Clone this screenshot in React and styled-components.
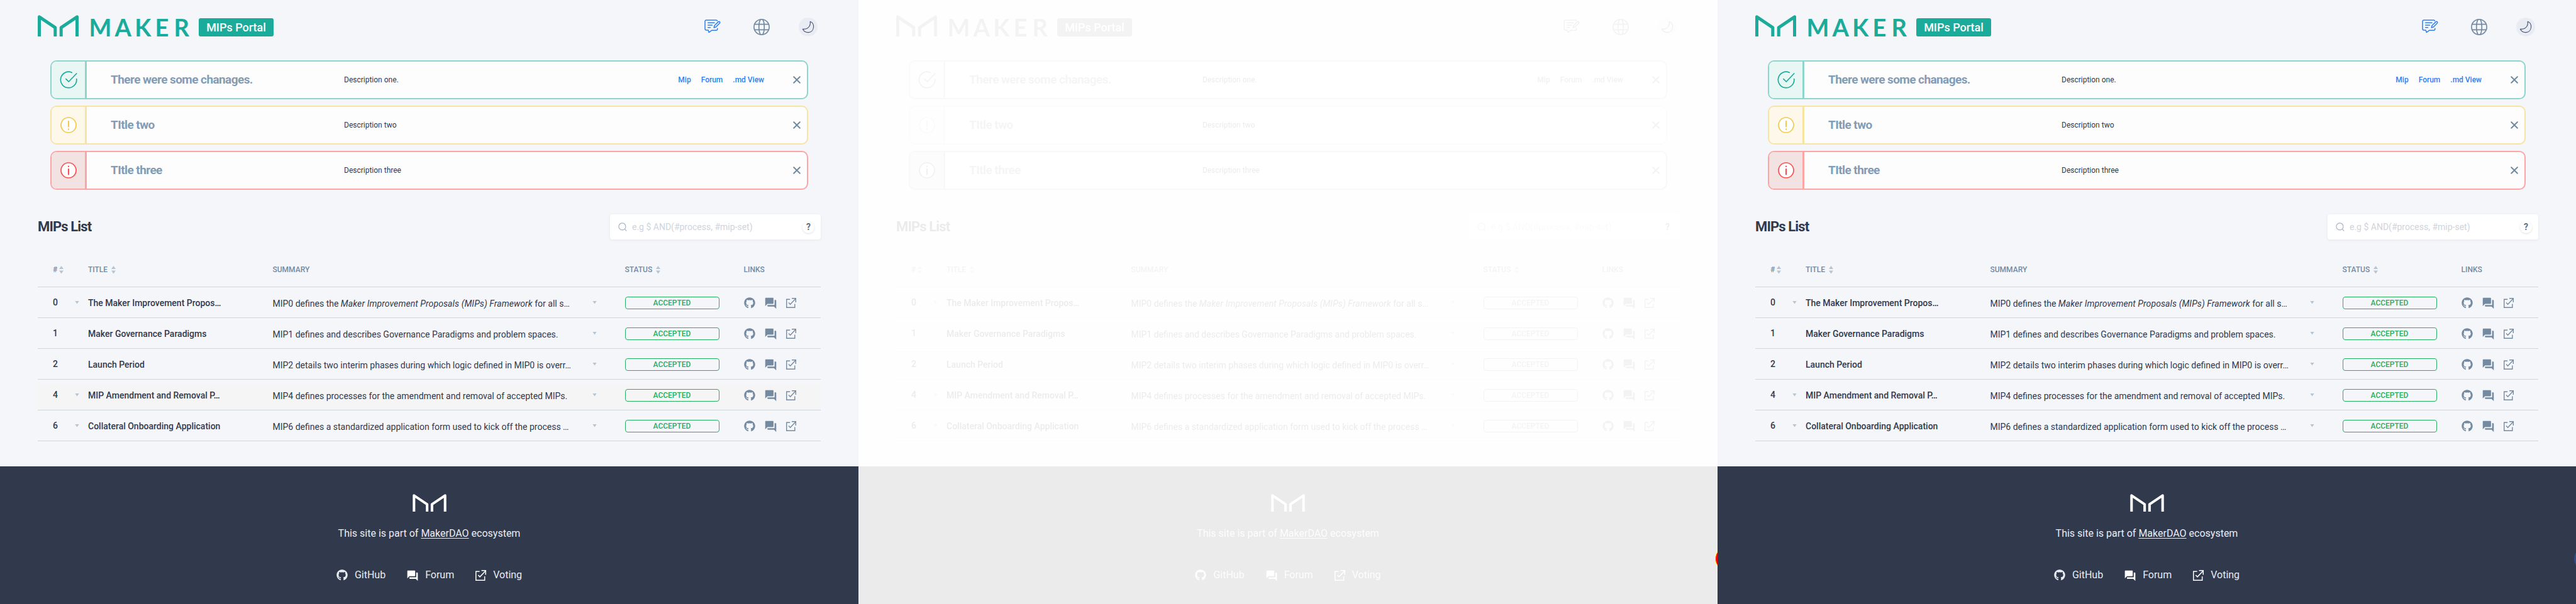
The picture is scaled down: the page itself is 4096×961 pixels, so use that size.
import React from "react";
import styled, { createGlobalStyle, css } from "styled-components";
import { FaGithub } from "react-icons/fa";
import { MdForum } from "react-icons/md";

const GlobalStyle = createGlobalStyle`
  * { box-sizing: border-box; }
  body { margin: 0; background: #fff; font-family: Roboto, "Liberation Sans", sans-serif; }
`;

const Board = styled.div`
  display: grid;
  grid-template-columns: 1365px 1366px 1365px;
  height: 961px;
  overflow: hidden;
`;

const Pane = styled.section`
  position: relative;
  overflow: hidden;
  height: 961px;
  background: #fff;
`;

const Page = styled.div`
  display: flex;
  flex-direction: column;
  height: 961px;
  background: #f5f6fa;
  color: #31394d;
  ${(p) => p.$faded && css`filter: grayscale(1) opacity(0.1);`}
`;

const HelpBubble = styled.div`
  position: absolute;
  left: 1362px;
  top: 870px;
  width: 38px;
  height: 38px;
  border-radius: 50%;
  background: ${(p) => (p.$changed ? "#f00" : "#2f4f86")};
  border: ${(p) => (p.$changed ? "1px solid #ff0" : "none")};
`;

const Header = styled.header`
  display: flex;
  justify-content: space-between;
  height: 96px;
  padding: 24px 65px 0 60px;
`;

const Brand = styled.div`
  display: flex;
  align-items: flex-end;
  height: 34px;
`;

const BrandLogo = styled.svg`
  width: 245px;
  height: 34px;
  overflow: visible;
  margin-right: 11px;
`;

const Portal = styled.span`
  width: 119px;
  height: 29px;
  border-radius: 3px;
  background: #1aab9b;
  color: #fff;
  font-size: 18px;
  font-weight: 500;
  line-height: 29px;
  text-align: center;
`;

const Tools = styled.nav`
  display: flex;
  align-items: center;
  height: 30px;
  margin-top: 4px;
`;

const ChatIcon = styled.svg`
  width: 26px;
  height: 22px;
  margin: 0 52px 3px 0;
`;

const GlobeIcon = styled.svg`
  width: 26px;
  height: 26px;
  margin-right: 46px;
`;

const ThemeButton = styled.span`
  display: flex;
  align-items: center;
  justify-content: center;
  width: 30px;
  height: 30px;
  border-radius: 50%;
  background: #e9ecf3;
`;

const Alerts = styled.div`
  display: flex;
  flex-direction: column;
  gap: 10px;
  padding: 0 80px;
  margin-bottom: 39px;
`;

const tones = {
  success: { line: "#8dd5cd", tint: "#e8f7f4" },
  warning: { line: "#f8e3a1", tint: "#fdf8e9" },
  danger: { line: "#fda5a5", tint: "#f3e2e2" },
};

const Alert = styled.article`
  display: flex;
  align-items: center;
  height: 62px;
  border: 2px solid ${(p) => tones[p.$tone].line};
  border-radius: 10px;
  background: #fdfdfd;
  overflow: hidden;
`;

const AlertIcon = styled.div`
  display: flex;
  align-items: center;
  justify-content: center;
  width: 56px;
  height: 58px;
  border-right: 3px solid ${(p) => tones[p.$tone].line};
  background: ${(p) => tones[p.$tone].tint};
`;

const AlertTitle = styled.h3`
  width: 371px;
  margin: 0 0 0 38px;
  color: #839cb5;
  font-size: 19px;
  font-weight: 700;
  letter-spacing: -0.58px;
  line-height: 24px;
`;

const AlertText = styled.p`
  flex: 1;
  margin: 0;
  font-size: 12px;
  line-height: 18px;
`;

const AlertLinks = styled.div`
  display: flex;
  gap: 16px;
  margin-right: 46px;
  color: #2f80ed;
  font-size: 12px;
  font-weight: 500;
  line-height: 18px;
`;

const CloseIcon = styled.svg`
  width: 12px;
  height: 12px;
  margin-right: 10px;
  stroke: #708aa0;
  stroke-width: 2;
  stroke-linecap: round;
`;

const ListBar = styled.div`
  display: flex;
  align-items: center;
  justify-content: space-between;
  height: 40px;
  margin: 0 60px 21px;
`;

const ListTitle = styled.h2`
  margin: 0;
  font-size: 22px;
  font-weight: 700;
  letter-spacing: -0.88px;
  line-height: 40px;
`;

const Search = styled.div`
  display: flex;
  align-items: center;
  width: 335px;
  height: 40px;
  padding: 0 10px 0 13px;
  border-radius: 4px;
  background: #fff;
  box-shadow: 0 1px 4px rgba(49, 57, 77, 0.07);
`;

const Placeholder = styled.span`
  flex: 1;
  margin-left: 8px;
  color: #d0d4db;
  font-size: 14px;
  line-height: 20px;
`;

const Hint = styled.span`
  width: 19px;
  height: 19px;
  border-radius: 50%;
  box-shadow: 0 1px 3px rgba(49, 57, 77, 0.16);
  color: #5b7086;
  font-size: 14px;
  font-weight: 700;
  line-height: 19px;
  text-align: center;
`;

const Table = styled.div`
  flex: 1;
  margin: 0 60px;
`;

const columns = css`
  display: grid;
  grid-template-columns: 35px 21px 293.5px 508.5px 51.5px 189px 1fr;
  align-items: center;
  padding-left: 24px;
  border-bottom: 1px solid #d1d5da;
`;

const HeadRow = styled.div`
  ${columns}
  height: 55px;
  color: #748aa1;
  font-size: 12px;
  font-weight: 500;
`;

const HeadCell = styled.span`
  display: flex;
  align-items: center;
  gap: ${(p) => (p.$tight ? 3 : 6)}px;
  grid-column: ${(p) => p.$col};
`;

const SortIcon = styled.svg`
  width: 7px;
  height: 13px;
  fill: #b7c5d3;
`;

const Row = styled.div`
  ${columns}
  height: 49px;
  font-size: 14px;
  line-height: 20px;
  background: ${(p) => (p.$hover ? "linear-gradient(#f5f6fa 7px, #f5f5f5 7px)" : "none")};
`;

const Num = styled.span`
  font-weight: 500;
`;

const Name = styled.span`
  padding-top: 2px;
  font-weight: 500;
`;

const Summary = styled.span`
  padding-top: 3px;
  white-space: nowrap;

  em { letter-spacing: 0.1px; }
`;

const Caret = styled.span`
  width: 7px;
  height: 5px;
  background: #b7c5d3;
  clip-path: polygon(0 0, 100% 0, 50% 100%);
`;

const Status = styled.span`
  width: 150px;
  height: 20px;
  margin-top: 2px;
  border: 1px solid #27ae60;
  border-radius: 4px;
  color: #27ae60;
  font-size: 12px;
  font-weight: 500;
  line-height: 18px;
  text-align: center;
`;

const Links = styled.span`
  display: flex;
  align-items: center;
  gap: 14px;
  padding: 2px 0 0 0.5px;
  color: #748aa1;
`;

const Footer = styled.footer`
  display: flex;
  flex-direction: column;
  align-items: center;
  height: 219px;
  padding-top: 44px;
  background: #31394d;
  color: #e9ecf3;
  font-size: 16px;
`;

const FooterLogo = styled.svg`
  width: 54px;
  height: 28px;
`;

const FooterText = styled.p`
  margin: 23px 0 0;
  line-height: 24px;
`;

const FooterAnchor = styled.span`
  text-decoration: underline;
  text-underline-offset: 2px;
`;

const FooterLinks = styled.div`
  display: flex;
  gap: 34px;
  margin-top: 42px;
`;

const FooterLink = styled.span`
  display: flex;
  align-items: center;
  gap: 11px;
  line-height: 24px;
`;

const FooterForum = styled(MdForum)`
  width: 20px;
  height: 20px;
  margin: 1px -1px 0;
  color: #fff;
`;

const MarkStrokes = ({ color, weight }) => (
  <g fill="none" stroke={color} strokeWidth={weight} strokeLinejoin="round">
    <path d="M2.5 34V2.8L27.8 19.8V34" />
    <path d="M62.5 34V2.8L37.2 19.8V34" />
  </g>
);

const MAKER = [["M", 81.4], ["A", 122.4], ["K", 154.3], ["E", 186.4], ["R", 216.4]];

const Logo = () => (
  <BrandLogo viewBox="0 0 245 34">
    <MarkStrokes color="#1aab9b" weight={5} />
    <text y="34" fill="#1aab9b" fontFamily="Lato, sans-serif" fontWeight="700" fontSize="38">
      {MAKER.map(([letter, x]) => <tspan key={letter} x={x}>{letter}</tspan>)}
    </text>
  </BrandLogo>
);

const Chat = () => (
  <ChatIcon viewBox="0 0 26 22" fill="none" stroke="#2f80ed" strokeWidth="1.5" strokeLinecap="round" strokeLinejoin="round">
    <path d="M20.5 2.2C20.2 1.3 19.8 1 18.8 1H3.2C1.7 1 1 1.8 1 3.2V14.8C1 16.4 1.8 17 3.2 17H6.2L7.2 20.6L12 17.2H18.8C20.2 17.2 20.9 16.6 20.9 14.2" />
    <path d="M5.7 5.3H16M5.7 9H12.5M5.7 12.7H9.5" />
    <path d="M15.2 13L16 9.8L22 3.9C22.8 3.1 24 3.2 24.4 3.8C25 4.5 24.8 5.2 24.2 5.9L18.3 12Z" />
  </ChatIcon>
);

const Globe = () => (
  <GlobeIcon viewBox="0 0 26 26" fill="none" stroke="#748aa1" strokeWidth="1.7">
    <circle cx="13" cy="13" r="12.1" />
    <path d="M1.8 8.7H24.2M1.8 17.3H24.2" />
    <path d="M11.2 1C7.9 6.5 7.9 19.5 11.2 25M14.8 1C18.1 6.5 18.1 19.5 14.8 25" />
  </GlobeIcon>
);

const Moon = () => (
  <svg width="20" height="20" viewBox="0 0 20 20" fill="none" stroke="#4a5574" strokeWidth="1.1" strokeLinejoin="round">
    <path d="M13.2 1.3C17 2.8 19 6.2 18.6 10.2C18 15.2 14.6 18.5 10.2 18.6C6.4 18.7 3 16.6 1.3 13.2C5.6 13.8 9.6 12.3 11.8 9C13.4 6.6 13.8 4 13.2 1.3Z" />
  </svg>
);

const ToneIcon = ({ tone }) => {
  if (tone === "success")
    return (
      <svg width="28" height="28" viewBox="0 0 28 28" fill="none" stroke="#1aab9b" strokeWidth="1.7" strokeLinecap="round" strokeLinejoin="round">
        <path d="M19.3 2.4A12.7 12.7 0 1 0 26.7 12.6" />
        <path d="M9.9 12.7L14.2 17L26.7 4" />
      </svg>
    );
  const color = tone === "warning" ? "#f2c94c" : "#fb4f4f";
  return (
    <svg width="26" height="26" viewBox="0 0 26 26" fill="#fff" stroke={color} strokeWidth="1.7" strokeLinecap="round">
      <circle cx="13" cy="13" r="12" />
      {tone === "warning" ? (
        <path d="M13 7V15.5M13 19.4V19.8" strokeWidth="2.2" />
      ) : (
        <path d="M13 6.6V7M13 11V19.5" strokeWidth="2.2" />
      )}
    </svg>
  );
};

const Vote = ({ size, color }) => (
  <svg width={size} height={size} viewBox="0 0 16 16" fill="none" stroke={color} strokeWidth="1.4">
    <path d="M6.2 2.2H0.7V15.3H13.8V9.5" />
    <path d="M4 7.6L6.6 10.2L14.8 1.6" />
    <path d="M9 0.7H15.3V7" />
  </svg>
);

const Sort = () => (
  <SortIcon viewBox="0 0 7 13">
    <path d="M3.5 0L7 5H0ZM3.5 12.4L0 7.4H7Z" />
  </SortIcon>
);

const Close = () => (
  <CloseIcon viewBox="0 0 12 12"><path d="M1.2 1.2L10.8 10.8M10.8 1.2L1.2 10.8" /></CloseIcon>
);

const alerts = [
  { tone: "success", title: "There were some chanages.", text: "Description one.", links: ["Mip", "Forum", ".md View"] },
  { tone: "warning", title: "TItle two", text: "Description two", links: [] },
  { tone: "danger", title: "TItle three", text: "Description three", links: [] },
];

const rows = [
  { n: 0, sub: true, name: "The Maker Improvement Propos…", text: <>MIP0 defines the <em>Maker Improvement Proposals (MIPs) Framework</em> for all s…</> },
  { n: 1, sub: false, name: "Maker Governance Paradigms", text: "MIP1 defines and describes Governance Paradigms and problem spaces." },
  { n: 2, sub: false, name: "Launch Period", text: "MIP2 details two interim phases during which logic defined in MIP0 is overr…" },
  { n: 4, sub: true, name: "MIP Amendment and Removal P…", text: "MIP4 defines processes for the amendment and removal of accepted MIPs." },
  { n: 6, sub: true, name: "Collateral Onboarding Application", text: "MIP6 defines a standardized application form used to kick off the process …" },
];

const PortalPage = ({ faded, hovered }) => (
  <Page $faded={faded}>
    <Header>
      <Brand>
        <Logo />
        <Portal>MIPs Portal</Portal>
      </Brand>
      <Tools>
        <Chat />
        <Globe />
        <ThemeButton><Moon /></ThemeButton>
      </Tools>
    </Header>
    <Alerts>
      {alerts.map((a) => (
        <Alert key={a.tone} $tone={a.tone}>
          <AlertIcon $tone={a.tone}><ToneIcon tone={a.tone} /></AlertIcon>
          <AlertTitle>{a.title}</AlertTitle>
          <AlertText>{a.text}</AlertText>
          <AlertLinks>{a.links.map((l) => <span key={l}>{l}</span>)}</AlertLinks>
          <Close />
        </Alert>
      ))}
    </Alerts>
    <ListBar>
      <ListTitle>MIPs List</ListTitle>
      <Search>
        <svg width="14" height="14" viewBox="0 0 14 14" fill="none" stroke="#9fb0c1" strokeWidth="1.1" strokeLinecap="round">
          <circle cx="6.4" cy="6.4" r="5.5" />
          <path d="M10.4 10.6L13 13.2" />
        </svg>
        <Placeholder>e.g $ AND(#process, #mip-set)</Placeholder>
        <Hint>?</Hint>
      </Search>
    </ListBar>
    <Table>
      <HeadRow>
        <HeadCell $col={1} $tight>#<Sort /></HeadCell>
        <HeadCell $col={3}>TITLE<Sort /></HeadCell>
        <HeadCell $col={4}>SUMMARY</HeadCell>
        <HeadCell $col={6}>STATUS<Sort /></HeadCell>
        <HeadCell $col={7}>LINKS</HeadCell>
      </HeadRow>
      {rows.map((r) => (
        <Row key={r.n} $hover={hovered === r.n}>
          <Num>{r.n}</Num>
          {r.sub ? <Caret /> : <span />}
          <Name>{r.name}</Name>
          <Summary>{r.text}</Summary>
          <Caret />
          <Status>ACCEPTED</Status>
          <Links>
            <FaGithub size={18} />
            <MdForum size={21} />
            <Vote size={16} color="#748aa1" />
          </Links>
        </Row>
      ))}
    </Table>
    <Footer>
      <FooterLogo viewBox="0 0 65 34"><MarkStrokes color="#fff" weight={4.9} /></FooterLogo>
      <FooterText>This site is part of <FooterAnchor>MakerDAO</FooterAnchor> ecosystem</FooterText>
      <FooterLinks>
        <FooterLink><FaGithub size={18} />GitHub</FooterLink>
        <FooterLink><FooterForum />Forum</FooterLink>
        <FooterLink><Vote size={17} color="#fff" />Voting</FooterLink>
      </FooterLinks>
    </Footer>
  </Page>
);

export default function App() {
  return (
    <>
      <GlobalStyle />
      <Board>
        <Pane><PortalPage hovered={4} /></Pane>
        <Pane>
          <PortalPage faded />
          <HelpBubble $changed />
        </Pane>
        <Pane>
          <PortalPage />
          <HelpBubble />
        </Pane>
      </Board>
    </>
  );
}
